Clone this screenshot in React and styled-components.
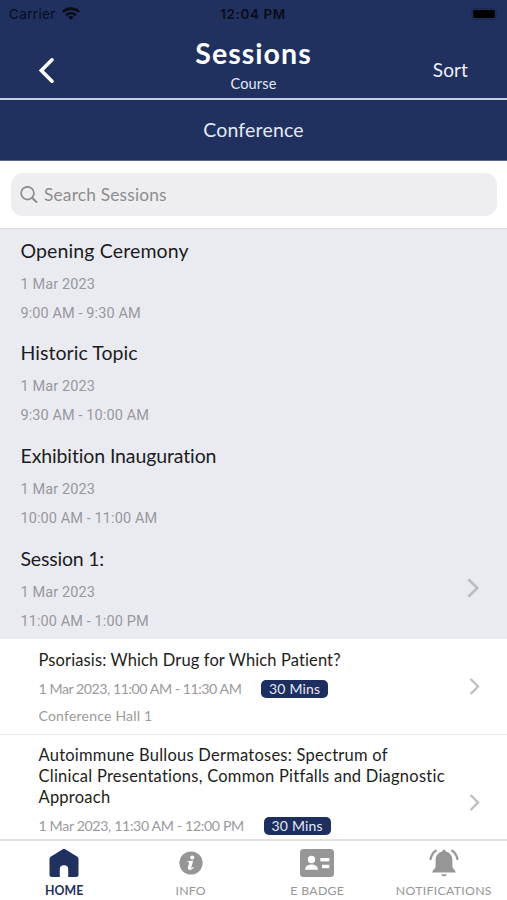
import React from 'react';
import styled, { createGlobalStyle } from 'styled-components';

const GlobalStyle = createGlobalStyle`
  * {
    box-sizing: border-box;
  }
  body {
    margin: 0;
    background-color: white;
    font-family: Lato, 'Open Sans', sans-serif;
  }
`;

const navy = '#203160';

const Screen = styled.div`
  width: 507px;
  height: 900px;
  display: flex;
  flex-direction: column;
  overflow: hidden;
  background-color: white;
`;

/* Header */
const StatusBar = styled.div`
  height: 28px;
  flex: none;
  display: grid;
  grid-template-columns: 1fr auto 1fr;
  align-items: center;
  padding: 0 10px 0 9px;
  background-color: ${navy};
  color: #080c18;
  font-family: Inter, sans-serif;
  font-size: 13.5px;
`;
const Carrier = styled.div`
  display: flex;
  align-items: center;
  gap: 6px;
  letter-spacing: 0.35px;
`;
const Clock = styled.span`
  font-weight: 600;
  letter-spacing: 0.6px;
`;
const Battery = styled.div`
  justify-self: end;
  width: 26px;
  height: 12px;
  padding: 1px;
  border: 1px solid #1a284f;
  border-radius: 4px;

  &::before {
    content: '';
    display: block;
    height: 8px;
    border-radius: 2px;
    background-color: black;
  }
`;
const Header = styled.header`
  height: 72px;
  flex: none;
  display: grid;
  grid-template-columns: 1fr auto 1fr;
  background-color: ${navy};
  border-bottom: 2px solid #c9cbe0;
  color: white;
`;
const BackButton = styled.button`
  align-self: center;
  justify-self: start;
  display: flex;
  margin: 14px 0 0 38px;
  padding: 0;
  border: 0;
  background: none;
  color: white;
`;
const Heading = styled.div`
  padding-top: 8px;
  text-align: center;
`;
const Title = styled.h1`
  margin: 0;
  font-family: Lato, sans-serif;
  font-size: 28.5px;
  line-height: 34px;
  font-weight: 700;
  letter-spacing: 1.05px;
`;
const Subtitle = styled.div`
  font-size: 14.5px;
  line-height: 28px;
  letter-spacing: 0.15px;
  color: #e4e8f5;
`;
const SortButton = styled.button`
  align-self: center;
  justify-self: end;
  margin: 14px 39px 0 0;
  padding: 0;
  border: 0;
  background: none;
  color: #eef0fa;
  font-family: inherit;
  font-size: 19px;
  line-height: 24px;
  letter-spacing: 0.1px;
`;
const Category = styled.div`
  height: 61px;
  flex: none;
  border-bottom: 1px solid #60658e;
  background-color: ${navy};
  color: #e4e8f5;
  font-size: 19.5px;
  line-height: 60px;
  letter-spacing: 0.2px;
  text-align: center;
`;

/* Search */
const SearchWrap = styled.div`
  height: 67.5px;
  flex: none;
  padding: 12px 10px 0 11px;
  border-bottom: 1px solid #dedfe3;
`;
const SearchBox = styled.div`
  display: flex;
  align-items: center;
  gap: 6.5px;
  height: 43px;
  padding-left: 8.5px;
  border-radius: 12px;
  background-color: #eeeef0;
  color: #8c8c91;
  font-size: 17.3px;
  letter-spacing: 0.2px;
`;

/* Session list */
const List = styled.main`
  flex: 1 1 0;
  min-height: 0;
  overflow: hidden;
`;
const Row = styled.section`
  display: flex;
  align-items: center;
  justify-content: space-between;
`;
const SessionRow = styled(Row)`
  height: 102.7px;
  padding: 0 28.5px 0 20.5px;
  background-color: #eaebf1;
`;
const SessionInfo = styled.div`
  align-self: flex-start;
  padding-top: 9px;
`;
const SessionTitle = styled.h2`
  margin: 0 0 7px;
  color: #1c1c22;
  font-size: 19.5px;
  line-height: 25px;
  font-weight: 400;
  letter-spacing: ${({ $spacing }) => $spacing}px;
`;
const SessionTime = styled.div`
  color: #98989d;
  font-family: Roboto, sans-serif;
  font-size: 14.5px;
  line-height: 29.2px;
  letter-spacing: 0.1px;
`;
const TalkRow = styled(Row)`
  min-height: ${({ $height }) => $height}px;
  padding: 0 27.5px 0 38.5px;
  border-bottom: 1px solid #e8e8ea;
`;
const TalkInfo = styled.div`
  align-self: flex-start;
  padding-top: 10.5px;
`;
const TalkTitle = styled.h3`
  margin: 0 0 4.5px;
  color: #1d1d20;
  font-size: 16.5px;
  line-height: 20.8px;
  font-weight: 400;
  letter-spacing: ${({ $spacing }) => $spacing}px;
  white-space: pre-line;
`;
const TalkMeta = styled.div`
  display: flex;
  align-items: center;
  gap: 19.8px;
  height: 27px;
  color: #9a9a9d;
  font-size: 14.2px;
  letter-spacing: ${({ $spacing }) => $spacing}px;
`;
const Duration = styled.span`
  width: 67px;
  height: 18px;
  border-radius: 5px;
  background-color: #1d2e60;
  color: #e4e8f5;
  font-size: 14px;
  line-height: 17px;
  letter-spacing: 0.2px;
  text-align: center;
`;
const Hall = styled.div`
  height: 24px;
  color: #9a9a9d;
  font-size: 14px;
  line-height: 27px;
  letter-spacing: 0.22px;
`;

/* Tab bar */
const TabBar = styled.nav`
  height: 61px;
  flex: none;
  display: grid;
  grid-template-columns: repeat(4, 1fr);
  padding: 1px 0 0 1px;
  border-top: 2px solid #e2e2e4;
  background-color: white;
`;
const Tab = styled.div`
  display: flex;
  flex-direction: column;
  align-items: center;
  color: ${({ $active }) => ($active ? navy : '#969696')};
`;
const TabIcon = styled.div`
  display: flex;
  align-items: center;
  height: 42px;
`;
const TabLabel = styled.span`
  font-size: 12.3px;
  line-height: 14px;
  font-weight: ${({ $active }) => ($active ? 700 : 400)};
  letter-spacing: ${({ $spacing }) => $spacing}px;
  white-space: nowrap;
`;

const WifiIcon = () => (
  <svg width="18" height="14" viewBox="0 0 18 14" fill="none" stroke="currentColor" strokeWidth="2.6">
    <path d="M1 4.9C5.4 0.5 12.6 0.5 17 4.9" />
    <path d="M4 8.2C6.8 5.5 11.2 5.5 14 8.2" />
    <path d="M9 12.8L6.2 10C7.8 8.6 10.2 8.6 11.8 10Z" fill="currentColor" stroke="none" />
  </svg>
);

const BackIcon = () => (
  <svg width="17" height="27" viewBox="0 0 17 27" fill="none" stroke="currentColor" strokeWidth="3.6" strokeLinecap="round">
    <path d="M14 2.8L3.3 13.5L14 24.2" strokeLinejoin="miter" />
  </svg>
);

const SearchIcon = () => (
  <svg width="18" height="18" viewBox="0 0 18 18" fill="none" stroke="currentColor" strokeWidth="1.7">
    <circle cx="7.5" cy="7.2" r="6.4" />
    <path d="M12 11.7L17 16.4" strokeWidth="2" />
  </svg>
);

const Chevron = ({ width, height, stroke }) => (
  <svg width={width} height={height} viewBox="0 0 12 20" fill="none" stroke="#bebec1" strokeWidth={stroke}>
    <path d="M1.4 1.2L10.2 10L1.4 18.8" />
  </svg>
);

const HomeIcon = () => (
  <svg width="30" height="30" viewBox="0 0 30 30" fill="currentColor">
    <path d="M13.8 1.2Q15 0.4 16.2 1.2L28 8.4Q29.5 9.3 29.5 11V26.5Q29.5 29 27 29H19.2V21.5Q19.2 17.3 15 17.3Q10.8 17.3 10.8 21.5V29H3Q0.5 29 0.5 26.5V11Q0.5 9.3 2 8.4Z" />
  </svg>
);

const InfoIcon = () => (
  <svg width="24" height="24" viewBox="0 0 24 24" fill="currentColor">
    <circle cx="12" cy="12" r="11.6" />
    <circle cx="13.2" cy="6.5" r="2" fill="white" />
    <path d="M8.5 10.2L14.2 9.5L12.3 16.5Q12.1 17.5 14.5 15.9L15 16.8Q12.5 19.2 10.3 18.9Q8.3 18.5 9 16L10.3 11.5L8.4 11.1Z" fill="white" />
  </svg>
);

const BadgeIcon = () => (
  <svg width="34" height="28" viewBox="0 0 34 28">
    <rect width="34" height="28" rx="3.5" fill="currentColor" />
    <g fill="white">
      <circle cx="11.5" cy="10.5" r="3.7" />
      <path d="M5 20.8C5 13.8 18 13.8 18 20.8Z" />
      <rect x="20.3" y="9" width="9" height="3.4" />
      <rect x="22" y="15.8" width="7.3" height="3.4" />
    </g>
  </svg>
);

const BellIcon = () => (
  <svg width="30" height="28" viewBox="0 0 30 28" fill="currentColor">
    <path d="M13.2 2.4C13.2 0.2 16.8 0.2 16.8 2.4C21.4 3.5 23.4 7 23.4 11V17.5C23.4 20 26.7 20.8 26.7 23.6H3.3C3.3 20.8 6.6 20 6.6 17.5V11C6.6 7 8.6 3.5 13.2 2.4Z" />
    <path d="M12.2 25.2H17.8C17.2 28 12.8 28 12.2 25.2Z" />
    <path d="M7.6 1.2Q2.4 4 1.4 10.8M22.4 1.2Q27.6 4 28.6 10.8" fill="none" stroke="currentColor" strokeWidth="2.3" />
  </svg>
);

const sessions = [
  { title: 'Opening Ceremony', time: '9:00 AM - 9:30 AM', spacing: 0.13 },
  { title: 'Historic Topic', time: '9:30 AM - 10:00 AM', spacing: 0.05 },
  { title: 'Exhibition Inauguration', time: '10:00 AM - 11:00 AM', spacing: -0.12 },
  { title: 'Session 1:', time: '11:00 AM - 1:00 PM', spacing: -0.2, hasTalks: true },
];

const talks = [
  {
    title: 'Psoriasis: Which Drug for Which Patient?',
    time: '1 Mar 2023, 11:00 AM - 11:30 AM',
    hall: 'Conference Hall 1',
    height: 95.5,
    titleSpacing: 0.12,
    timeSpacing: -0.47,
  },
  {
    title: 'Autoimmune Bullous Dermatoses: Spectrum of\nClinical Presentations, Common Pitfalls and Diagnostic\nApproach',
    time: '1 Mar 2023, 11:30 AM - 12:00 PM',
    height: 137,
    titleSpacing: 0.24,
    timeSpacing: -0.37,
  },
];

const tabs = [
  { label: 'HOME', Icon: HomeIcon, active: true, spacing: 0.05 },
  { label: 'INFO', Icon: InfoIcon, spacing: 0.2 },
  { label: 'E BADGE', Icon: BadgeIcon, spacing: 0.3 },
  { label: 'NOTIFICATIONS', Icon: BellIcon, spacing: 0.3 },
];

export default function App() {
  return (
    <Screen>
      <GlobalStyle />
      <StatusBar>
        <Carrier>
          Carrier
          <WifiIcon />
        </Carrier>
        <Clock>12:04 PM</Clock>
        <Battery />
      </StatusBar>
      <Header>
        <BackButton aria-label="Back">
          <BackIcon />
        </BackButton>
        <Heading>
          <Title>Sessions</Title>
          <Subtitle>Course</Subtitle>
        </Heading>
        <SortButton>Sort</SortButton>
      </Header>
      <Category>Conference</Category>
      <SearchWrap>
        <SearchBox>
          <SearchIcon />
          Search Sessions
        </SearchBox>
      </SearchWrap>
      <List>
        {sessions.map(({ title, time, spacing, hasTalks }) => (
          <SessionRow key={title}>
            <SessionInfo>
              <SessionTitle $spacing={spacing}>{title}</SessionTitle>
              <SessionTime>1 Mar 2023</SessionTime>
              <SessionTime>{time}</SessionTime>
            </SessionInfo>
            {hasTalks && <Chevron width={12} height={20} stroke={2.9} />}
          </SessionRow>
        ))}
        {talks.map(({ title, time, hall, height, titleSpacing, timeSpacing }) => (
          <TalkRow key={title} $height={height}>
            <TalkInfo>
              <TalkTitle $spacing={titleSpacing}>{title}</TalkTitle>
              <TalkMeta $spacing={timeSpacing}>
                {time}
                <Duration>30 Mins</Duration>
              </TalkMeta>
              {hall && <Hall>{hall}</Hall>}
            </TalkInfo>
            <Chevron width={11} height={17} stroke={2.7} />
          </TalkRow>
        ))}
      </List>
      <TabBar>
        {tabs.map(({ label, Icon, active, spacing }) => (
          <Tab key={label} $active={active}>
            <TabIcon>
              <Icon />
            </TabIcon>
            <TabLabel $active={active} $spacing={spacing}>{label}</TabLabel>
          </Tab>
        ))}
      </TabBar>
    </Screen>
  );
}
